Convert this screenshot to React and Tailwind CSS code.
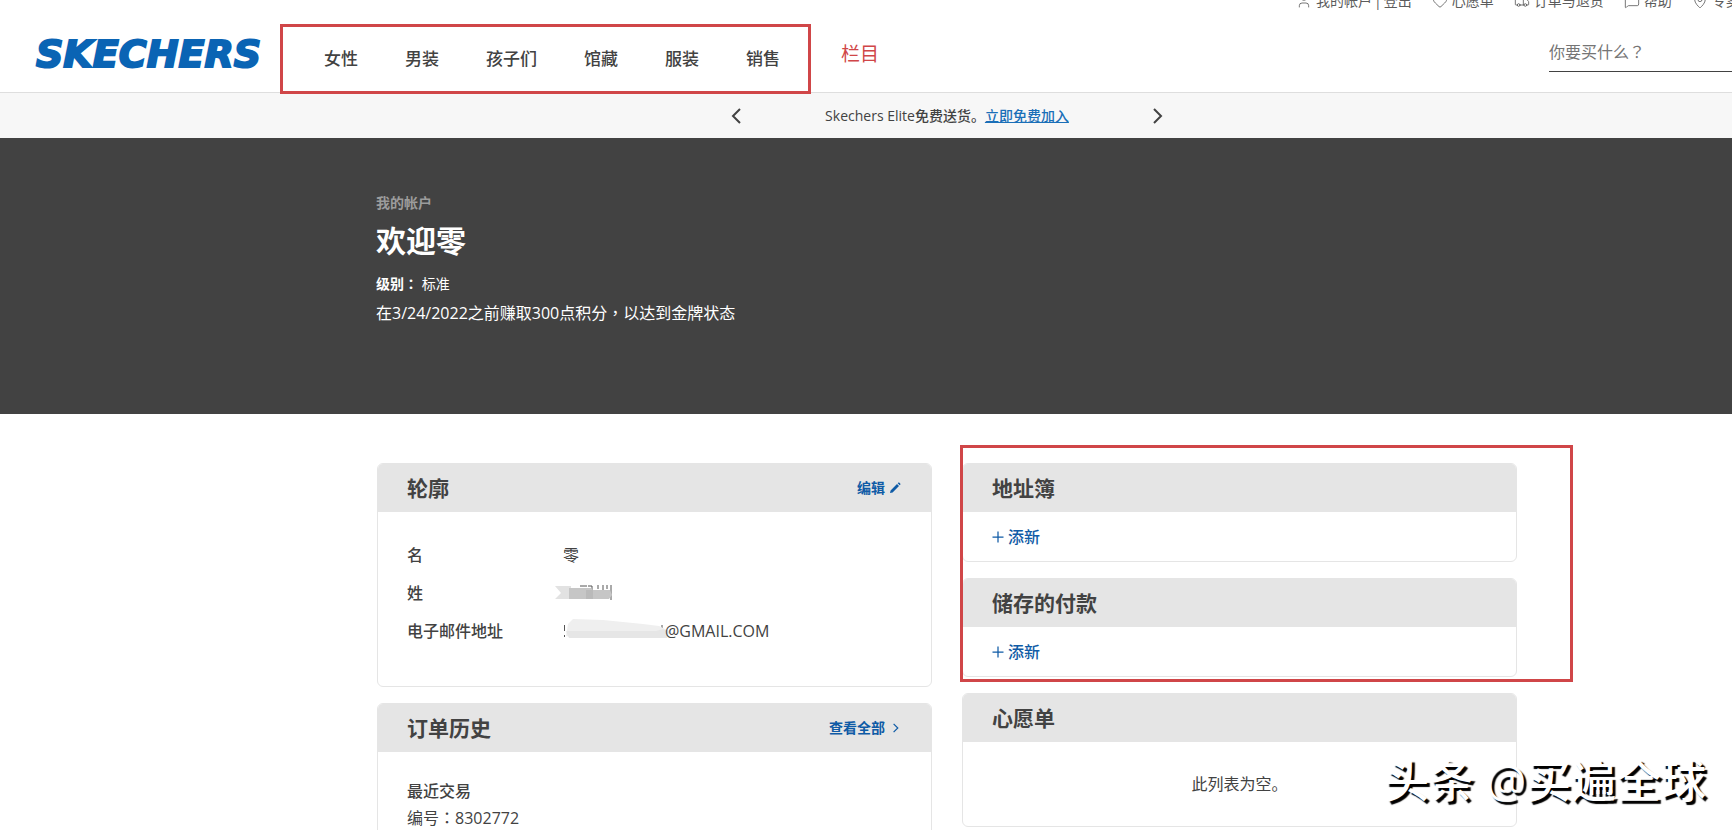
import React from "react";
import { User, Heart, Truck, MessageSquare, MapPin } from "lucide-react";

const categories = ["女性", "男装", "孩子们", "馆藏", "服装", "销售"];

function Logo() {
  return (
    <a href="#home" aria-label="SKECHERS" className="shrink-0">
      <svg width="252" height="48" viewBox="0 0 252 48" aria-hidden="true">
        <text
          x="2"
          y="37"
          fill="#0a64b4"
          stroke="#0a64b4"
          strokeWidth="2"
          className="font-['DejaVu_Sans',sans-serif] text-[38px] font-bold italic"
        >
          SKECHERS
        </text>
      </svg>
    </a>
  );
}

function UtilityLink({ icon: Icon, children }) {
  return (
    <a href="#utility" className="flex items-center gap-1">
      <Icon className="size-4" strokeWidth={1.25} />
      {children}
    </a>
  );
}

function Chevron({ direction, className }) {
  return (
    <svg viewBox="0 0 10 16" fill="none" stroke="currentColor" strokeWidth="2" className={className} aria-hidden="true">
      <path d={direction === "left" ? "M9 1L2 8l7 7" : "M1 1l7 7-7 7"} />
    </svg>
  );
}

function Pencil() {
  return (
    <svg viewBox="0 0 12 12" fill="currentColor" className="size-3" aria-hidden="true">
      <path d="M1 11l.6-2.6L8 2l2 2-6.4 6.4L1 11zM8.7 1.3l.5-.5c.4-.4.9-.4 1.2 0l.8.8c.4.4.4.9 0 1.2l-.5.5-2-2z" />
    </svg>
  );
}

// Full-width punctuation set in the middle of its square
function Mark({ children }) {
  return <span className="font-['Noto_Sans_CJK_TC',sans-serif]">{children}</span>;
}

function Card({ title, action, children }) {
  return (
    <section className="overflow-hidden rounded-md border border-[#e5e5e5] bg-white">
      <header className="flex h-12 items-center justify-between bg-[#e5e5e5] pr-[30px] pl-[29px]">
        <h2 className="text-[21px] leading-7 font-bold">{title}</h2>
        {action}
      </header>
      {children}
    </section>
  );
}

function CardLink({ children }) {
  return (
    <a href="#details" className="flex items-center gap-1 text-sm font-bold text-[#0f5ba6]">
      {children}
    </a>
  );
}

function AddNew() {
  return (
    <div className="flex h-[49px] items-center px-[29px]">
      <button type="button" className="flex items-center gap-1 font-medium text-[#0f5ba6]">
        <svg viewBox="0 0 12 12" stroke="currentColor" strokeWidth="1.25" className="size-3" aria-hidden="true">
          <path d="M6 .5v11M.5 6h11" />
        </svg>
        添新
      </button>
    </div>
  );
}

function MaskedName() {
  return (
    <svg width="64" height="24" viewBox="0 0 64 24" className="-ml-2" aria-hidden="true">
      <path d="M25 5h7M33 5h4v4M43 4v4M48 4v14M52 4v4M56 4v15" stroke="#555" fill="none" />
      <path d="M0 5h16v13H0l6-6z" fill="#e2e2e2" />
      <path d="M14 7l22 0 2 2h17l2 5-3 4H14z" fill="#c6c6c6" />
      <path d="M31 9h7v9h-7z" fill="#bababa" />
    </svg>
  );
}

function MaskedMail() {
  return (
    <svg width="112" height="24" viewBox="0 0 112 24" className="-mr-2.5" aria-hidden="true">
      <path d="M1.500 6v6M1.500 16v2M6 6v3M99 6v3" stroke="#555" fill="none" />
      <path d="M3 17L5 5l5-5 30 1 40 4 16 2 10 5-2 7H12z" fill="#efefef" />
      <path d="M3 12h90l7-2 6 3-2 6H6z" fill="#e6e6e6" />
    </svg>
  );
}

function ProfileRow({ label, children }) {
  return (
    <div className="flex h-[38px] items-center">
      <dt className="w-[156px] font-medium">{label}</dt>
      <dd className="flex items-center">{children}</dd>
    </div>
  );
}

export default function App() {
  return (
    <div className="relative h-screen overflow-hidden bg-white font-['Open_Sans','Noto_Sans_CJK_SC',sans-serif] text-base text-[#424242]">
      <header className="flex h-[93px] justify-between border-b border-[#dedede] pl-[34px]">
        <div className="flex items-center">
          <div className="pt-4">
            <Logo />
          </div>
          <nav className="relative mt-[25px] ml-[38px] flex gap-[47px] text-[17px] leading-6 font-medium">
            {categories.map((name) => (
              <a key={name} href="#category">
                {name}
              </a>
            ))}
            <span className="pointer-events-none absolute -top-[23px] -right-[31px] -bottom-[23px] -left-[44px] border-3 border-[#d04648]" />
          </nav>
          <span className="mt-4 ml-[61px] text-[19px] text-[#d04648]">栏目</span>
        </div>
        <div className="flex w-[436px] shrink-0 flex-col overflow-hidden whitespace-nowrap">
          <div className="-mt-[9px] flex shrink-0 gap-5 text-sm leading-5 text-[#5c5c5c]">
            <div className="flex gap-0.5">
              <UtilityLink icon={User}>我的帐户</UtilityLink>
              <span>|</span>
              <a href="#logout">登出</a>
            </div>
            <UtilityLink icon={Heart}>心愿单</UtilityLink>
            <UtilityLink icon={Truck}>订单与退货</UtilityLink>
            <UtilityLink icon={MessageSquare}>帮助</UtilityLink>
            <UtilityLink icon={MapPin}>专卖店</UtilityLink>
          </div>
          <input
            type="search"
            aria-label="搜索"
            placeholder="你要买什么？"
            className="mt-6 ml-[253px] h-[37px] border-b border-[#424242] bg-transparent pb-1 font-['Noto_Sans_CJK_TC',sans-serif] placeholder:text-[#757575] focus:outline-none"
          />
        </div>
      </header>

      <div className="flex h-[45px] items-center bg-[#f7f7f7] pr-[215px] pl-[377px]">
        <div className="flex w-full items-center justify-center gap-[84px] text-sm">
          <button type="button" aria-label="上一个">
            <Chevron direction="left" className="h-4 w-2.5" />
          </button>
          <p className="text-center">
            Skechers Elite<span className="font-medium">免费送货。</span>
            <a href="#join" className="font-medium text-[#1a6fb8] underline">
              立即免费加入
            </a>
          </p>
          <button type="button" aria-label="下一个">
            <Chevron direction="right" className="h-4 w-2.5" />
          </button>
        </div>
      </div>

      <div className="h-[276px] bg-[#424242] pt-[55px] pl-[376px] text-white">
        <p className="text-sm font-bold text-[#9c9c9c]">我的帐户</p>
        <h1 className="mt-2 text-3xl leading-10 font-bold">欢迎零</h1>
        <p className="mt-3 text-sm">
          <strong>
            级别<Mark>：</Mark>
          </strong>{" "}
          标准
        </p>
        <p className="mt-2 leading-5">
          在3/24/2022之前赚取300点积分<Mark>，</Mark>以达到金牌状态
        </p>
      </div>

      <main className="grid grid-cols-2 items-start gap-[30px] pt-[49px] pr-[215px] pl-[377px]">
        <div className="flex flex-col gap-4">
          <Card
            title="轮廓"
            action={
              <CardLink>
                编辑 <Pencil />
              </CardLink>
            }
          >
            <dl className="px-[29px] pt-[24px] pb-[36px]">
              <ProfileRow label="名">零</ProfileRow>
              <ProfileRow label="姓">
                <MaskedName />
              </ProfileRow>
              <ProfileRow label="电子邮件地址">
                <MaskedMail />
                @GMAIL.COM
              </ProfileRow>
            </dl>
          </Card>
          <Card
            title="订单历史"
            action={
              <CardLink>
                查看全部 <Chevron direction="right" className="mr-0.5 ml-1 h-2.5 w-1.5" />
              </CardLink>
            }
          >
            <div className="px-[29px] py-[26px] leading-[26px]">
              <h3 className="font-medium">最近交易</h3>
              <p>
                编号<Mark>：</Mark>8302772
              </p>
            </div>
          </Card>
        </div>
        <div className="flex flex-col gap-4">
          <div className="relative flex flex-col gap-4">
            <Card title="地址簿">
              <AddNew />
            </Card>
            <Card title="储存的付款">
              <AddNew />
            </Card>
            <span className="pointer-events-none absolute -top-[18px] -right-[56px] -bottom-[5px] -left-[2px] border-3 border-[#d04648]" />
          </div>
          <Card title="心愿单">
            <p className="py-[30px] text-center">此列表为空。</p>
          </Card>
        </div>
      </main>

      <p className="absolute right-[26px] bottom-4 text-[45px] leading-[66px] font-medium text-white text-shadow-[3px_3px_1px_#000]">
        头条 @买遍全球
      </p>
    </div>
  );
}
